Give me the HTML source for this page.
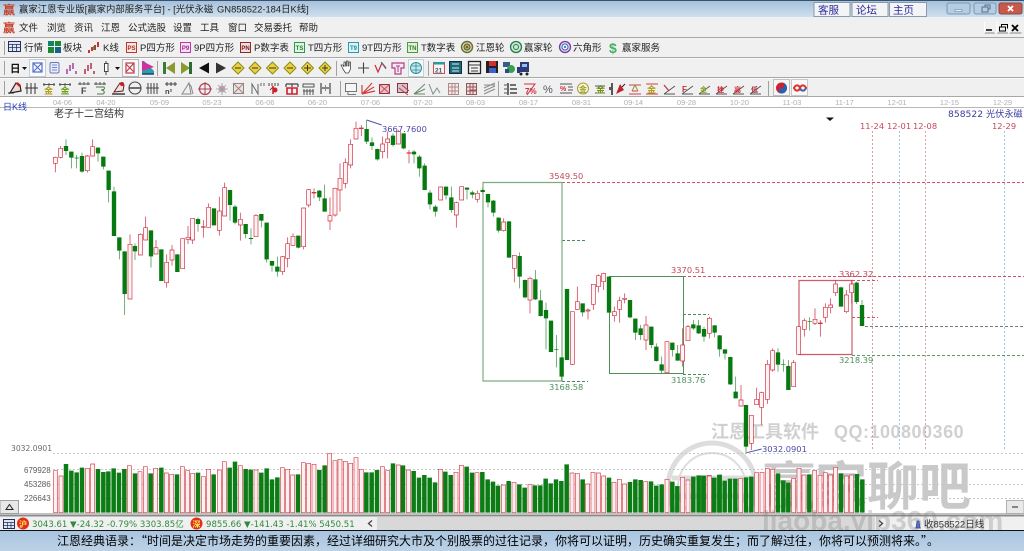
<!DOCTYPE html>
<html lang="zh"><head><meta charset="utf-8"><title>赢家江恩专业版</title>
<style>
html,body{margin:0;padding:0;width:1024px;height:551px;overflow:hidden;background:#fff}
svg{display:block;filter:blur(.3px)}
text{font-family:"Liberation Sans","Noto Sans CJK SC",sans-serif}
.ui{font-size:9.5px;fill:#222}
.ax{font-size:7.5px;fill:#b0b0b0;text-anchor:middle}
.num{font-family:"DejaVu Sans","Noto Sans CJK SC",sans-serif;font-size:8.3px}
.g{fill:#4f8f5f}.r{fill:#c4485a}.b{fill:#4a4aa8}
.rw{fill:none;stroke:#cf3f50;stroke-width:2.3}
.rb{fill:#fff3f3;stroke:#cc3345;stroke-width:2}
.gw{fill:none;stroke:#3f8f4a;stroke-width:2.2}
.gb{fill:none;stroke:#067a10;stroke-width:13}
.vr{fill:#fff0f0;stroke:#cf4454;stroke-width:2}
.vg{fill:none;stroke:#0c7c14;stroke-width:13.5}
</style></head><body>
<svg width="1024" height="551" viewBox="0 0 1024 551" xmlns="http://www.w3.org/2000/svg">
<defs>
<linearGradient id="tg" x1="0" y1="0" x2="0" y2="1"><stop offset="0" stop-color="#a4bfda"/><stop offset="1" stop-color="#cfe0ee"/></linearGradient>
<linearGradient id="qg" x1="0" y1="0" x2="0" y2="1"><stop offset="0" stop-color="#a9c5e0"/><stop offset="1" stop-color="#bcd2e6"/></linearGradient>
</defs>
<rect width="1024" height="551" fill="#fff"/>
<!-- title bar -->
<rect width="1024" height="17" fill="url(#tg)"/><rect width="1024" height="1" fill="#35536f"/>
<text x="3" y="14" font-size="12" font-weight="700" fill="#c43c22">赢</text>
<text x="19" y="12.5" font-size="9.4" fill="#222">赢家江恩专业版[赢家内部服务平台] - [光伏永磁</text>
<text x="217" y="12.5" font-size="9.4" fill="#222">GN858522-184日K线]</text>
<g fill="#f2f4f6" stroke="#8a9aaa">
<rect x="814" y="2.5" width="36" height="14"/><rect x="852" y="2.5" width="36" height="14"/><rect x="889.5" y="2.5" width="37" height="14"/></g>
<g font-size="10.5" fill="#2a2aa0"><text x="818" y="13.5">客服</text><text x="856" y="13.5">论坛</text><text x="893" y="13.5">主页</text></g>
<rect x="947" y="3" width="23" height="11" rx="2" fill="#b4cde2" stroke="#7e98b0"/><rect x="974" y="3" width="22" height="11" rx="2" fill="#b4cde2" stroke="#7e98b0"/><rect x="999" y="3" width="23" height="11" rx="2" fill="#c9584a" stroke="#8a4a44"/>
<path d="M955 9.5h7v2h-7z" fill="#e8f0f6" stroke="#607890" stroke-width=".6"/><path d="M982 7h6v5h-6zM985 7V5h5v4h-2" fill="none" stroke="#54708a"/><path d="M1008 6l5 5M1013 6l-5 5" stroke="#fff" stroke-width="1.8"/>
<!-- menu bar -->
<rect y="17" width="1024" height="20" fill="#f0f0f0"/><rect y="37" width="1024" height="1" fill="#a8a8a8"/>
<text x="3" y="32" font-size="12" font-weight="700" fill="#c43c22">赢</text>
<g><text class="ui" x="19" y="31">文件</text><text class="ui" x="47" y="31">浏览</text><text class="ui" x="74" y="31">资讯</text><text class="ui" x="101" y="31">江恩</text><text class="ui" x="128" y="31">公式选股</text><text class="ui" x="173" y="31">设置</text><text class="ui" x="200" y="31">工具</text><text class="ui" x="228" y="31">窗口</text><text class="ui" x="254" y="31">交易委托</text><text class="ui" x="299" y="31">帮助</text></g>
<path d="M984.5 33h10M997 33h11M1009.5 33h12" stroke="#888"/><path d="M984.5 22v11M997 22v11M1009.5 22v11" stroke="#fff"/>
<path d="M986 30h6" stroke="#000" stroke-width="1.5"/><path d="M999.5 27h6v4h-6zM1001.5 27v-2.5h6v4" fill="none" stroke="#000"/><path d="M1012 25l6 6M1018 25l-6 6" stroke="#000" stroke-width="1.8"/>
<!-- rows -->
<rect y="38" width="1024" height="59" fill="#f0f0f0"/>
<path d="M0 57.5h1024M0 77.5h1024M0 96.5h1024" stroke="#a8a8a8"/><path d="M0 58.5h1024M0 78.5h1024" stroke="#fbfbfb"/>
<path d="M4.5 41v14M4.5 61v14M4.5 81v14" stroke="#a0a0a0"/>
<!-- row 1 icons -->
<rect x="8.5" y="41.5" width="12" height="10" fill="#dfe6f4" stroke="#22305e"/><path d="M8.5 44.5h12M8.5 47.5h12M12.5 44v7M16.5 44v7" stroke="#22305e" stroke-width=".8"/>
<text class="ui" x="24" y="51">行情</text>
<rect x="48" y="41" width="6" height="5" fill="#16806a"/><rect x="55" y="41" width="6" height="5" fill="#1a8a30"/><rect x="48" y="47" width="6" height="6" fill="#1a8a30"/><rect x="55" y="47" width="6" height="6" fill="#16608a"/>
<text class="ui" x="63" y="51">板块</text>
<path d="M89 50v3M92 47v4M95 45v5M98 42v5" stroke="#d03030" stroke-width="2"/><path d="M94 46v4" stroke="#1a8a30" stroke-width="1.5"/>
<text class="ui" x="103" y="51">K线</text>
<g font-size="6" font-weight="700" text-anchor="middle">
<rect x="126.5" y="42.5" width="10" height="10" fill="#fbe6e0" stroke="#b83c30"/><text x="131.5" y="50" fill="#a03028">PS</text>
<rect x="180.5" y="42.5" width="10" height="10" fill="#fbe0f4" stroke="#b83ca0"/><text x="185.5" y="50" fill="#9a2a90">P9</text>
<rect x="240.5" y="42.5" width="10" height="10" fill="#f6dede" stroke="#8a2a2a"/><text x="245.5" y="50" fill="#702020">PN</text>
<rect x="294.5" y="42.5" width="10" height="10" fill="#e2f6e0" stroke="#2a9a50"/><text x="299.5" y="50" fill="#208040">TS</text>
<rect x="348.5" y="42.5" width="10" height="10" fill="#def4f4" stroke="#2a9ab0"/><text x="353.5" y="50" fill="#208a9a">T9</text>
<rect x="407.5" y="42.5" width="10" height="10" fill="#e4f0d8" stroke="#4a9a40"/><text x="412.5" y="50" fill="#3a7a30">TN</text>
</g>
<text class="ui" x="140" y="51">P四方形</text><text class="ui" x="194" y="51">9P四方形</text><text class="ui" x="254" y="51">P数字表</text><text class="ui" x="308" y="51">T四方形</text><text class="ui" x="362" y="51">9T四方形</text><text class="ui" x="421" y="51">T数字表</text>
<circle cx="467" cy="47" r="5.5" fill="#d8d8c0" stroke="#6f6a2a" stroke-width="1.4"/><circle cx="467" cy="47" r="3" fill="#c8a060" stroke="#386a30"/><circle cx="467" cy="47" r="1" fill="#803020"/>
<text class="ui" x="476" y="51">江恩轮</text>
<circle cx="516" cy="47" r="5.5" fill="#c8e8d0" stroke="#2a7a4a" stroke-width="1.3"/><circle cx="516" cy="47" r="2.5" fill="none" stroke="#2a7a4a"/>
<text class="ui" x="524" y="51">赢家轮</text>
<circle cx="565" cy="47" r="5.5" fill="#dcd8f4" stroke="#7a3aa0" stroke-width="1.3"/><circle cx="565" cy="47" r="3" fill="#fff" stroke="#3a60b0"/><circle cx="565" cy="47" r="1.2" fill="#3a8aa0"/>
<text class="ui" x="573" y="51">六角形</text>
<text x="609" y="53" font-size="14" font-weight="700" fill="#46b060">$</text>
<text class="ui" x="622" y="51">赢家服务</text>
<!-- row 2 -->
<text x="10" y="72" font-size="10.5" font-weight="700" fill="#111">日</text><path d="M22 67h5l-2.500 3z" fill="#111"/>
<rect x="29.5" y="59.5" width="16" height="17" fill="#f8fbfe" stroke="#c4ccd4"/>
<path d="M33 63l9 9M42 63l-9 9M33 63h9v9h-9z" fill="none" stroke="#5a70c8" stroke-width="1.2"/>
<rect x="50" y="62.5" width="9" height="10.5" rx="1.5" fill="#e8ecfa" stroke="#6a78c0"/><path d="M52 65h5M52 67.5h5M52 70h5" stroke="#7a88c8"/>
<path d="M67 74v-5M70 71v-6M73 69v-6M76 74v-3" stroke="#a040a0" stroke-width="1.5"/><path d="M85 74v-5M88 71v-6M91 69v-6M94 74v-3" stroke="#b03050" stroke-width="1.5"/>
<rect x="104.5" y="63.5" width="3.5" height="8" fill="#fff" stroke="#444"/><path d="M106 61v2M106 72v3" stroke="#444"/><path d="M115 67h5l-2.500 3z" fill="#111"/>
<rect x="122.5" y="59.5" width="16" height="17" fill="#f8f8f8" stroke="#b8b8b8"/><path d="M126 64l8 8M134 63l-8 9M126 63h8v10h-8z" fill="none" stroke="#c04050" stroke-width="1.2"/>
<path d="M142 61v13h12v-3l-10-10z" fill="#2aa0a0"/><path d="M142 61l12 6-12 4z" fill="#d030a0"/><path d="M142 74h12" stroke="#204080" stroke-width="1.5"/>
<path d="M157.5 61v15" stroke="#a0a0a0"/>
<path d="M163 62h3v12h-3z" fill="#3a7a3a"/><path d="M175 62v12l-9-6z" fill="#8a9a30"/><path d="M181 62v12l9-6z" fill="#8a9a30"/><path d="M189 62h3v12h-3z" fill="#2a6a2a"/>
<path d="M209 62.500v11l-10-5.500z" fill="#111"/><path d="M216 62.500v11l10-5.500z" fill="#333"/>
<g fill="#ecd23a" stroke="#8a8a20"><path d="M238 62l6 6-6 6-6-6z"/><path d="M255 62l6 6-6 6-6-6z"/><path d="M272.5 62l6 6-6 6-6-6z"/><path d="M290 62l6 6-6 6-6-6z"/><path d="M307.5 62l6 6-6 6-6-6z"/><path d="M325 62l6 6-6 6-6-6z"/></g>
<path d="M235 68h6M252 68h6M269 68h7M287 68h6M304 68h7M322 68h6M307.5 65v6M325 65v6" stroke="#333"/>
<path d="M336.5 61v15" stroke="#a0a0a0"/>
<path d="M343 69l-2-4 2 0 1 2v-5h1.5v4h1v-5h1.500v5h1v-4h1.500v7l-2 4h-3z" fill="#fff" stroke="#444" stroke-width=".8"/>
<path d="M358 68h11M363.5 62.5v11" stroke="#444" stroke-width="1.1"/>
<path d="M375 65l3 7 4-9 4 5" fill="none" stroke="#c03040" stroke-width="1.2"/><path d="M381 62l5 7" stroke="#4a6a9a"/>
<path d="M392 63h12v5h-3v6h-6v-6h-3z" fill="#f8e8f4" stroke="#b04080" stroke-width="1.2"/><path d="M396 66h4M398 66v6" stroke="#b04080"/>
<rect x="408.5" y="59.5" width="15" height="17" fill="#f4fbfb" stroke="#c4d4d4"/><circle cx="416" cy="68" r="5.5" fill="#c8e8ec" stroke="#2a8a9a"/><path d="M412 66h8M412 70h8M416 63v10" stroke="#2a8a9a" stroke-width=".8"/>
<path d="M428.5 61v15" stroke="#a0a0a0"/>
<rect x="433.5" y="62.5" width="11" height="11" fill="#fff0f0" stroke="#c85058"/><rect x="433.5" y="62" width="11" height="2.5" fill="#2a9a9a"/><text x="435" y="72.500" font-size="6.5" font-weight="700" fill="#1a6a8a">21</text>
<rect x="449.5" y="61.5" width="12" height="12" fill="#1a6a7a" stroke="#103040"/><path d="M452 64h7M452 68h7M452 71h7" stroke="#bcd" stroke-width="1.2"/>
<rect x="468.5" y="61.5" width="12" height="12" fill="#f4f4f4" stroke="#222" stroke-width="1.3"/><path d="M468 65h12M471 68h7M471 71h7" stroke="#333"/>
<rect x="486" y="61" width="12" height="12" fill="#222"/><rect x="489" y="61" width="7" height="5" fill="#d03030"/><rect x="489" y="68" width="7" height="5" fill="#4060d0"/>
<rect x="503" y="62" width="7" height="5" fill="#3a5a8a"/><circle cx="511" cy="69" r="4" fill="#3aa050"/><rect x="505" y="69" width="4" height="4" fill="#2a4a8a"/>
<path d="M520 62h9v10h-9zM517 67h3v6h-3z" fill="#2a3a7a"/><path d="M522 64h5v3h-5z" fill="#9abce8"/><circle cx="521" cy="74" r="1.5" fill="#222"/><circle cx="527" cy="74" r="1.5" fill="#222"/>
<!-- row 3 -->
<path d="M10 93l6-10 4 2 1 6z" fill="#f4d8d8" stroke="#222" stroke-width="1.2"/><path d="M17 83l3 3" stroke="#c02020" stroke-width="2.5"/><path d="M8 93h6" stroke="#222"/>
<path d="M27 83v11M31 83v11M35 83v11M25 88h13" stroke="#333"/>
<path d="M44 83v3M49 83v3M54 83v3M43 84.5h12M60 83v3M65 83v3M70 83v3M59 84.5h12" stroke="#555"/>
<text x="44" y="94" font-size="9" font-weight="700" fill="#b0a020">金</text><text x="60.5" y="94" font-size="9" font-weight="700" fill="#70a020">金</text>
<path d="M78 84h12M80 82v3M84 82v3M88 82v3" stroke="#555"/><text x="81" y="94" font-size="9" font-weight="700" fill="#444">F</text>
<path d="M94 84h12M96 82v3M100 82v3M104 82v3" stroke="#555"/><path d="M96 87h8c2 3-3 3-3 3M97 94h5c3 0 3-3 0-4" fill="none" stroke="#4a7a4a"/>
<path d="M114 92l6-9 4 2-1 6z" fill="#f0e0e0" stroke="#622"/><circle cx="122" cy="84" r="2" fill="#c02020"/><path d="M112 94h13" stroke="#222" stroke-width="1.3"/>
<circle cx="135" cy="88" r="6" fill="none" stroke="#444" stroke-width="1.1"/><path d="M129 88h12" stroke="#444" stroke-width="1.5"/>
<path d="M148 83v11M151 83v11M154 83v11M157 83v11M146 88h13" stroke="#444"/>
<path d="M165 84h12M167 82v4M171 82v4M175 82v4" stroke="#444"/><text x="165" y="94" font-size="7.5" font-weight="700" fill="#444">n²</text>
<path d="M182 94l7-11 2 11zM188 83l3 3 2 8" fill="none" stroke="#888"/>
<circle cx="205" cy="89" r="5.5" fill="none" stroke="#b04050" stroke-width="1.2"/><path d="M198 89h14M205 82v13" stroke="#b04050"/>
<circle cx="222" cy="89" r="3.5" fill="#e8a0a8"/><path d="M216 89h12M222 83v12M218 85l8 8M226 85l-8 8" stroke="#90a0a8" stroke-width=".8"/>
<rect x="233.5" y="83.5" width="10" height="10" fill="#e8e4e0" stroke="#888"/><path d="M233 83l11 11M244 83l-11 11" stroke="#b08080"/>
<path d="M252 94V84l6 10V84M261 83v3M264 83v3" fill="none" stroke="#666"/>
<path d="M269 83v3M272 83v3M275 83v3M278 83v3" stroke="#444"/><path d="M273 86v8" stroke="#c02020" stroke-width="1.5"/><circle cx="275" cy="90" r="2.5" fill="#d02030"/><path d="M270 90l3-3" stroke="#c02020"/>
<path d="M286 84h12M286 84v3M292 84v3M298 84v3" stroke="#444" stroke-width="1.2"/><path d="M287 88h10v6h-10zM292 88v6" fill="none" stroke="#d02030" stroke-width="1.6"/>
<path d="M303 84h11v3h-11zM304 89v6M307 89v6M310 89v6M313 89v6M303 91h11" fill="none" stroke="#555"/>
<path d="M321 83v11M330 83v11M322 88h3M329 88h-3" stroke="#444" stroke-width="1.2"/><path d="M325.5 85v6" stroke="#888"/>
<path d="M340.5 81v15" stroke="#a0a0a0"/>
<path d="M345.5 83.5h11v8h-11zM348 91.5v3h8" fill="#f6f6f6" stroke="#777"/>
<path d="M362 94l10-11M362 94l12-7M362 94l13-3M362 94v-9" stroke="#d04040" stroke-width="1.2"/>
<rect x="379.5" y="84.5" width="10" height="9" fill="#e8c4c8" stroke="#883040"/><path d="M379 84l11 10M390 84l-11 10" stroke="#d05060"/>
<rect x="397.5" y="83.5" width="10" height="9" fill="#d8c4c8" stroke="#803848"/><path d="M399 88l9 7M402 85l7 6" stroke="#c03850"/>
<path d="M414 94l11-10M414 94l11-5M414 94h11" stroke="#6a8a6a"/>
<path d="M429 84l4 10 4-6 3 5" fill="none" stroke="#7a9090"/>
<rect x="448.5" y="83.5" width="10" height="11" fill="#f6eaea" stroke="#b08888"/><path d="M448 87h11M448 91h11M452 83v12M455 83v12" stroke="#b08888"/>
<rect x="466.5" y="83.5" width="10" height="11" fill="#f0dede" stroke="#905858"/><path d="M466 87h11M466 91h11M470 83v12M473 83v12" stroke="#905858"/><path d="M470 90h6" stroke="#c04060"/>
<path d="M484 91l11-5M484 94l11-5M484 88l11-5M484 85l11 0" stroke="#8a8a8a"/>
<path d="M498.5 81v15" stroke="#a0a0a0"/>
<path d="M508 83v12M510 85h6M510 89h7M510 93h7" stroke="#222" stroke-width="1.3"/><path d="M504 85h3M504 89h3M504 93h3" stroke="#555"/>
<text x="525" y="94" font-size="8" font-weight="700" fill="#d03040">7%</text><path d="M524 84h11l-8 11" fill="none" stroke="#d03040"/>
<text x="543" y="93" font-size="11" fill="#556">%</text>
<path d="M560 84h12M560 93h12" stroke="#555"/><text x="560" y="91" font-size="7" font-weight="700" fill="#d03040">%</text><path d="M568 87h5M568 90h5" stroke="#555"/>
<circle cx="583" cy="88.5" r="5.5" fill="#fbf6d8" stroke="#a0a040"/><text x="579" y="92" font-size="8" font-weight="700" fill="#a0a030">金</text>
<path d="M595 86h10M595 93h10" stroke="#555"/><text x="596" y="93" font-size="9" font-weight="700" fill="#70901a">金</text>
<path d="M612 83v12M610 87v3" stroke="#222" stroke-width="1.5"/><path d="M616 94l4-10 4 6z" fill="#c02030"/><path d="M622 87l3-3" stroke="#222"/>
<path d="M629 85h12M632 91h6M629 94h12" stroke="#d04050"/><path d="M632 91l3-6 3 6" fill="none" stroke="#a09030"/>
<text x="647" y="93" font-size="9" font-weight="700" fill="#b0a020">金</text><path d="M646 84h12M646 94h12" stroke="#d04050"/>
<path d="M664 94l11-8M664 94h11" stroke="#555"/><path d="M664 85l5 6" stroke="#c03040" stroke-width="1.2"/>
<path d="M682 94l11-8M682 94h11" stroke="#555"/><text x="682" y="92" font-size="8" font-weight="700" fill="#c03040">F</text>
<path d="M699 94l11-8M699 94h11" stroke="#555"/><text x="700" y="92" font-size="7" font-weight="700" fill="#90a020">金</text>
<path d="M716 94l11-8M716 94h11" stroke="#555"/><text x="717" y="92" font-size="7" font-weight="700" fill="#d02030">挫</text>
<path d="M733 94l11-8M733 94h11" stroke="#555"/><text x="734" y="92" font-size="7" font-weight="700" fill="#d02030">高</text>
<path d="M750 94l11-8M750 94h11" stroke="#555"/><text x="751" y="92" font-size="7" font-weight="700" fill="#b03040">低</text>
<path d="M768.5 81v15" stroke="#a0a0a0"/>
<rect x="773.5" y="79.5" width="16" height="16" fill="#f6f6f6" stroke="#c0c0c0"/>
<circle cx="781.5" cy="88" r="5.5" fill="#d02030"/><path d="M781.5 82.5a5.5 5.5 0 0 1 0 11 2.7 2.7 0 0 1 0-5.5 2.7 2.7 0 0 0 0-5.5z" fill="#2a60b0"/>
<rect x="791.5" y="79.5" width="16" height="16" fill="#f8f8f8" stroke="#c8c8c8"/>
<path d="M794 88c2-4 5-3 6 0s4 4 6 0c-2-4-5-3-6 0s-4 4-6 0z" fill="none" stroke="#e03030" stroke-width="2"/><path d="M800 88c1 3 4 4 6 0" fill="none" stroke="#2a70c0" stroke-width="1.5"/>
<!-- date axis -->
<path d="M0 107.5h1024" stroke="#b8b8b8"/>
<g><text class="ax" x="62.5" y="105">04-06</text><text class="ax" x="106" y="105">04-20</text><text class="ax" x="159.5" y="105">05-09</text><text class="ax" x="212" y="105">05-23</text><text class="ax" x="265" y="105">06-06</text><text class="ax" x="317.5" y="105">06-20</text><text class="ax" x="370.5" y="105">07-06</text><text class="ax" x="423" y="105">07-20</text><text class="ax" x="475.5" y="105">08-03</text><text class="ax" x="528.5" y="105">08-17</text><text class="ax" x="581.5" y="105">08-31</text><text class="ax" x="633.5" y="105">09-14</text><text class="ax" x="686.5" y="105">09-28</text><text class="ax" x="739.5" y="105">10-20</text><text class="ax" x="792" y="105">11-03</text><text class="ax" x="844.5" y="105">11-17</text><text class="ax" x="897" y="105">12-01</text><text class="ax" x="949.5" y="105">12-15</text><text class="ax" x="1002.5" y="105">12-29</text></g>
<text x="3" y="110" font-size="9" fill="#2a40b8">日K线</text>
<text x="54" y="117" font-size="10" fill="#333">老子十二宫结构</text>
<text class="num" x="948" y="117" style="font-size:9.2px;fill:#3a3aa0">858522 光伏永磁</text>
<path d="M826 117.5h8l-4 3.5z" fill="#111"/>
<!-- watermark (behind chart) -->
<g opacity=".42">
<text x="711" y="438" font-size="18" font-weight="700" fill="#909090">江恩工具软件</text>
<text x="834" y="438" font-size="18" font-weight="700" fill="#909090" letter-spacing=".5">QQ:100800360</text>
</g>
<g opacity=".3" fill="none" stroke="#909090">
<circle cx="712" cy="487" r="44" stroke-width="5"/><circle cx="712" cy="487" r="34" stroke-width="2"/>
<path d="M672 478h80M672 496h80" stroke-width="5"/>
</g>
<text x="763" y="505" font-size="52" font-weight="700" fill="#808080" opacity=".42">赢家聊吧</text>
<!-- vertical cycle lines -->
<g stroke-dasharray="2 2"><path d="M872.5 131V451M925.5 131V451" stroke="#e09aa4"/><path d="M899.5 131V451M1004.5 131V451" stroke="#9ac4d8"/></g>
<g><text class="num r" x="860" y="129">11-24</text><text class="num r" x="887" y="129">12-01</text><text class="num r" x="913" y="129">12-08</text><text class="num r" x="992" y="129">12-29</text></g>
<!-- guides -->
<g stroke-dasharray="3 2" fill="none">
<path d="M562 182.5H1024M683 276.5H1024M852 280.5H878M852 317.5H878" stroke="#d4506a"/>
<path d="M562 240.5H587M683 314.5H709M683 374.5H709M562 381.5H588" stroke="#4a8a5a"/>
<path d="M852 355.5H1024" stroke="#5a9a6a"/>
<path d="M865 326.5H1024" stroke="#778"/>
<path d="M53 453.5H1024M53 469.5H1024M53 484.5H1024M53 498.5H1024" stroke="#c8c8c8" stroke-dasharray="2 2"/>
</g>
<!-- boxes -->
<g fill="none">
<path d="M483 182.5H562V381H483z" stroke="#7dab80" stroke-width="1.2"/>
<path d="M609.5 276.5H683.5V373.5H609.5z" stroke="#4f9058"/>
<path d="M799 280.5H852V354.5H799z" stroke="#cf5a68" stroke-width="1.2"/>
</g>
<!-- candles group 1 -->
<g transform="translate(0,120) scale(.33333)">
<path class="rw" d="M166 110V157M182 78V115M262 105V158M278 58V110M390 343V537M421 340V405M437 290V360M468 360V402M500 403V503M516 375V437M548 355V446M564 318V372M578 295V372M610 300V353M626 250V322M658 230V347M674 188V288M721 278V362M768 282V350M848 408V465M863 352V442M879 340V378M911 264V388M926 207V262M942 205V235M990 232V330M1005 203V290"/>
<path class="rb" d="M160 112h12V130h-12zM176 85h12V112h-12zM256 108h12V152h-12zM272 80h12V108h-12zM384 373h12V537h-12zM415 343h12V405h-12zM431 323h12V360h-12zM462 383h12V402h-12zM494 427h12V488h-12zM510 390h12V420h-12zM542 356h12V446h-12zM558 352h12V358h-12zM572 295h12V360h-12zM604 320h12V322h-12zM620 262h12V322h-12zM652 273h12V331h-12zM668 203h12V288h-12zM715 298h12V315h-12zM762 286h12V350h-12zM842 410h12V455h-12zM857 371h12V415h-12zM873 349h12V376h-12zM905 264h12V380h-12zM920 209h12V255h-12zM936 217h12V219h-12zM984 287h12V303h-12zM999 205h12V285h-12z"/>
<path class="gw" d="M198 58V105M214 95V145M230 105V145M246 98V158M294 82V125M310 110V148M326 152V247M342 200V348M358 352V418M374 394V585M405 370V420M453 331V443M484 388V483M532 403V456M594 292V335M642 265V316M690 210V302M705 255V313M737 312V355M753 325V373M784 282V322M800 308V428M816 422V455M832 410V470M895 347V385M958 210V243M974 194V275"/>
<path class="gb" d="M198 78V93M214 95V113M230 113V115M246 108V155M294 83V100M310 110V140M326 152V210M342 214V348M358 352V392M374 394V522M405 378V394M453 331V409M484 388V483M532 403V456M594 297V312M642 265V316M690 210V255M705 260V308M737 312V342M753 354V357M784 282V302M800 308V418M816 423V437M832 440V455M895 347V383M958 212V232M974 235V275"/>
</g>
<!-- candles group 2 -->
<g transform="translate(340,120) scale(.33333)">
<path class="rw" d="M0 130V275M16 115V205M32 58V145M48 5V58M64 15V48M128 50V115M143 35V115M175 30V72M207 90V130M302 200V240M349 245V323M365 200V240M412 212V248M491 295V335M523 405V487M570 470V580"/>
<path class="rb" d="M-6 175h12V210h-12zM10 128h12V190h-12zM26 73h12V135h-12zM42 25h12V57h-12zM58 24h12V26h-12zM122 72h12V95h-12zM137 57h12V68h-12zM169 35h12V72h-12zM201 98h12V100h-12zM296 201h12V240h-12zM343 248h12V285h-12zM359 200h12V240h-12zM406 220h12V238h-12zM485 306h12V332h-12zM517 406h12V445h-12zM564 475h12V540h-12z"/>
<path class="gw" d="M80 0V72M96 52V90M112 85V122M159 40V80M191 40V88M222 90V130M238 105V170M254 130V210M270 210V268M286 255V290M318 200V238M334 200V278M381 202V238M397 212V235M428 205V218M444 222V262M460 240V290M476 292V338M507 303V413M539 397V505M555 478V535M586 450V540M602 510V590"/>
<path class="gb" d="M80 27V65M96 67V78M112 87V118M159 47V75M191 40V85M222 95V103M238 110V145M254 137V210M270 218V253M286 260V275M318 200V226M334 232V270M381 203V209M397 217V224M428 210V216M444 222V247M460 242V278M476 293V332M507 304V413M539 408V470M555 480V532M586 478V538M602 541V588"/>
</g>
<!-- candles group 3 -->
<g transform="translate(460,260) scale(.33333)">
<path class="rw" d="M337 155V315M352 80V150M384 145V178M400 73V150M415 43V97M431 38V90M463 140V185M479 110V188M494 100V130M558 168V270M621 245V340M668 205V320M684 195V242M748 170V235M843 375V440"/>
<path class="rb" d="M331 155h12V313h-12zM346 125h12V148h-12zM378 150h12V153h-12zM394 73h12V133h-12zM409 47h12V80h-12zM425 40h12V65h-12zM457 155h12V167h-12zM473 122h12V148h-12zM488 115h12V118h-12zM552 195h12V240h-12zM615 245h12V338h-12zM662 255h12V303h-12zM678 200h12V242h-12zM742 175h12V220h-12zM837 420h12V438h-12z"/>
<path class="gw" d="M258 128V268M273 182V276M289 225V322M305 292V362M321 87V300M368 130V170M447 50V158M510 120V175M526 175V240M542 195V240M574 200V265M589 250V305M605 290V340M637 248V290M653 255V302M700 180V210M716 180V222M732 200V245M764 195V232M779 225V290M795 268V298M811 290V375M827 350V415"/>
<path class="gb" d="M258 150V175M273 182V276M289 267V269M305 292V350M321 87V300M368 130V157M447 50V158M510 120V172M526 176V218M542 205V225M574 200V255M589 260V303M605 313V332M637 248V270M653 280V302M700 193V205M716 196V220M732 207V230M764 196V218M779 226V268M795 268V281M811 291V373M827 395V415"/>
</g>
<!-- candles group 4 -->
<g transform="translate(700,270) scale(.33333)">
<path class="rw" d="M154 436V540M170 353V405M185 365V465M202 270V402M218 235V305M281 270V350M296 170V253M313 145V200M345 115V165M361 150V200M376 100V158M392 85V130M407 30V78M439 60V130M455 30V100"/>
<path class="rb" d="M148 436h12V520h-12zM164 388h12V404h-12zM179 368h12V412h-12zM196 283h12V388h-12zM212 242h12V300h-12zM275 278h12V350h-12zM290 170h12V253h-12zM307 152h12V178h-12zM339 148h12V160h-12zM355 159h12V161h-12zM370 112h12V142h-12zM386 105h12V113h-12zM401 42h12V68h-12zM433 75h12V125h-12zM449 42h12V68h-12z"/>
<path class="gw" d="M138 405V550M234 235V305M250 268V305M265 270V360M329 142V182M423 50V110M470 35V102M486 90V168"/>
<path class="gb" d="M138 405V530M234 247V284M250 282V284M265 288V360M329 153V155M423 52V110M470 38V96M486 105V168"/>
</g>
<!-- volume -->
<g transform="translate(0,440) scale(.33333)">
<path class="vr" d="M161 92h12V218h-12zM177 108h12V218h-12zM257 85h12V218h-12zM272 72h12V218h-12zM382 77h12V218h-12zM414 95h12V218h-12zM430 80h12V218h-12zM461 85h12V218h-12zM493 99h12V218h-12zM509 103h12V218h-12zM541 80h12V218h-12zM557 92h12V218h-12zM572 100h12V218h-12zM604 110h12V218h-12zM620 88h12V218h-12zM652 90h12V218h-12zM667 65h12V218h-12zM715 77h12V218h-12zM762 90h12V218h-12zM841 83h12V218h-12zM857 88h12V218h-12zM872 105h12V218h-12zM904 68h12V218h-12zM920 70h12V218h-12zM936 73h12V218h-12zM983 40h12V218h-12zM999 62h12V218h-12zM1014 58h12V218h-12zM1030 64h12V218h-12zM1046 70h12V218h-12zM1062 53h12V218h-12zM1078 88h12V218h-12zM1141 80h12V218h-12zM1157 92h12V218h-12zM1189 75h12V218h-12z"/>
<path class="vg" d="M198 72V218M214 92V218M230 97V218M246 83V218M294 87V218M310 96V218M325 94V218M341 85V218M357 98V218M373 87V218M405 100V218M452 100V218M484 83V218M531 103V218M594 98V218M641 103V218M689 83V218M705 65V218M737 87V218M752 89V218M784 98V218M800 85V218M816 118V218M832 112V218M894 103V218M958 90V218M974 76V218M1099 97V218M1115 97V218M1131 90V218M1179 70V218"/>
</g>
<g transform="translate(400,440) scale(.33333)">
<path class="vr" d="M19 90h12V218h-12zM115 88h12V218h-12zM162 97h12V218h-12zM178 76h12V218h-12zM225 98h12V218h-12zM304 135h12V218h-12zM336 127h12V218h-12zM384 133h12V218h-12zM510 99h12V218h-12zM526 100h12V218h-12zM557 132h12V218h-12zM573 97h12V218h-12zM589 99h12V218h-12zM605 108h12V218h-12zM636 127h12V218h-12zM652 118h12V218h-12zM668 132h12V218h-12zM731 125h12V218h-12zM795 118h12V218h-12zM842 112h12V218h-12zM858 120h12V218h-12zM921 106h12V218h-12z"/>
<path class="vg" d="M9 76V218M41 93V218M57 113V218M73 105V218M89 113V218M105 127V218M136 95V218M152 105V218M200 80V218M216 98V218M247 96V218M263 118V218M279 125V218M294 137V218M326 123V218M358 133V218M374 143V218M405 136V218M421 136V218M437 116V218M452 130V218M468 118V218M484 123V218M500 73V218M548 118V218M627 113V218M690 126V218M706 118V218M722 120V218M753 124V218M769 137V218M785 133V218M817 125V218M832 138V218M880 110V218M896 106V218M911 107V218M943 113V218M959 104V218"/>
</g>
<g transform="translate(700,410) scale(.33333)">
<path class="vr" d="M22 198h12V308h-12zM116 206h12V308h-12zM164 188h12V308h-12zM180 187h12V308h-12zM196 175h12V308h-12zM212 178h12V308h-12zM275 205h12V308h-12zM291 175h12V308h-12zM306 195h12V308h-12zM338 181h12V308h-12zM354 196h12V308h-12zM370 188h12V308h-12zM386 195h12V308h-12zM401 172h12V308h-12zM433 198h12V308h-12zM449 195h12V308h-12z"/>
<path class="vg" d="M10 197V308M42 204V308M58 195V308M74 212V308M90 206V308M106 206V308M138 202V308M154 200V308M234 190V308M250 211V308M265 218V308M328 193V308M423 190V308M471 192V308M487 208V308"/>
</g>
<!-- number labels -->
<path d="M366.7 120L381.7 125M746.7 452.7L761.700 449" stroke="#5050b0" fill="none"/>
<text class="num b" x="382" y="132">3667.7600</text>
<text class="num b" x="762" y="452">3032.0901</text>
<text class="num r" x="549" y="179">3549.50</text>
<text class="num r" x="671" y="273">3370.51</text>
<text class="num r" x="839" y="277">3362.32</text>
<text class="num g" x="549" y="390">3168.58</text>
<text class="num g" x="671" y="383">3183.76</text>
<text class="num g" x="839" y="363">3218.39</text>
<g font-size="8" fill="#5a5a5a"><text x="11" y="451" class="num" style="fill:#6a6a6a;font-size:7.6px">3032.0901</text><text x="24" y="473">679928</text><text x="24" y="487">453286</text><text x="24" y="501">226643</text></g>
<!-- bottom chrome -->
<rect y="513" width="1024" height="4" fill="#c0c0c0"/><rect y="515" width="1024" height="1" fill="#8a8a8a"/>
<rect x="0" y="500.5" width="18.500" height="13" fill="#e8e8e8" stroke="#a0a0a0"/><path d="M9.5 504.5l3.5 5h-7z" fill="none" stroke="#222"/>
<rect x="1006.5" y="500.5" width="17.500" height="13" fill="#e8e8e8" stroke="#b0b0b0"/><path d="M1012 507h6" stroke="#222"/>
<rect y="517" width="1024" height="13" fill="#f0f0f0"/>
<rect x="353" y="517" width="540" height="13" fill="#d8d8d8"/>
<rect x="353" y="517" width="24" height="13" fill="#efefef"/><rect x="875" y="517" width="20" height="13" fill="#efefef"/>
<path d="M372 520.5l-3.5 3 3.500 3M879 520.500l3.500 3-3.500 3" fill="none" stroke="#444" stroke-width="1.3"/>
<rect x="3.5" y="519.5" width="11" height="9" fill="#dfe6f4" stroke="#22305e"/><path d="M3.5 522.5h11M3.5 525.5h11M7.5 522v7M11 522v7" stroke="#22305e" stroke-width=".7"/>
<circle cx="23" cy="523.5" r="6" fill="#e03018"/><text x="19" y="527" font-size="8" font-weight="700" fill="#fbe060">沪</text>
<text class="num" x="32" y="527" style="font-size:8.55px;fill:#2f8a3f">3043.61 ▼-24.32 -0.79% 3303.85亿</text>
<circle cx="196.5" cy="523.5" r="6" fill="#e03018"/><text x="192.5" y="527" font-size="8" font-weight="700" fill="#fbe060">深</text>
<text class="num" x="206" y="527" style="font-size:8.55px;fill:#2f8a3f">9855.66 ▼-141.43 -1.41% 5450.51</text>
<text x="762" y="530" font-size="28" font-weight="700" fill="#808080" opacity=".3">liaoba.vip360.com</text>
<path d="M917 521l-1 7h4l-1-7zM915 528h6" fill="#5a6ac0" stroke="#3a4a90" stroke-width=".7"/>
<text x="924" y="527.5" font-size="9.5" fill="#333">收858522日线</text>
<!-- quote bar -->
<rect y="530" width="1024" height="1" fill="#111"/><rect y="531" width="1024" height="20" fill="url(#qg)"/>
<text x="57" y="545" font-size="12" fill="#000" style="font-family:'Noto Sans CJK SC','WenQuanYi Zen Hei',sans-serif">江恩经典语录：“时间是决定市场走势的重要因素，经过详细研究大市及个别股票的过往记录，你将可以证明，历史确实重复发生；而了解过往，你将可以预测将来。”。</text>
</svg>
</body></html>
